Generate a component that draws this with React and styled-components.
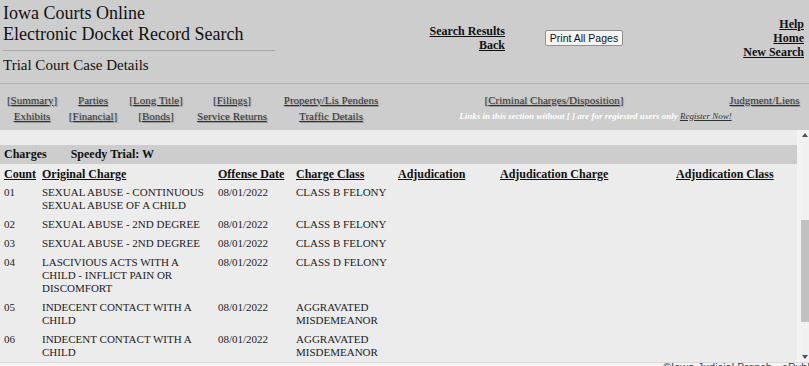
import React from 'react';
import styled, { createGlobalStyle } from 'styled-components';

const Global = createGlobalStyle`
  html, body { margin: 0; padding: 0; background: #cdcdcd; }
  body { font-family: "Liberation Serif", "Times New Roman", serif; overflow: hidden; }
`;

const Page = styled.div`
  width: 809px;
  height: 366px;
  overflow: hidden;
  display: flex;
  flex-direction: column;
  background: #cdcdcd;
  color: #111;
`;

const Header = styled.header`
  display: flex;
  align-items: flex-start;
  height: 84px;
  box-sizing: border-box;
  border-bottom: 1px solid #b4b4b4;
`;

const TitleBlock = styled.div`
  width: 275px;
  padding: 3px 0 0 3px;
  box-sizing: border-box;
`;

const Title = styled.div`
  font-size: 18px;
  line-height: 21px;
  color: #111;
`;

const Rule = styled.div`
  height: 1px;
  background: #a9a9a9;
  margin: 5px 0 6px;
`;

const Subtitle = styled.div`
  font-size: 15px;
  line-height: 17px;
  color: #111;
`;

const LinkStack = styled.div`
  display: flex;
  flex-direction: column;
  align-items: flex-end;
  margin-top: ${p => p.$top}px;
  width: ${p => p.$width ? `${p.$width}px` : 'auto'};
  margin-left: ${p => p.$auto ? 'auto' : '0'};
  padding-right: ${p => p.$pr || 0}px;
`;

const BoldLink = styled.a`
  font-size: 12px;
  line-height: 14px;
  font-weight: bold;
  color: #111;
  text-decoration: underline;
  cursor: pointer;
`;

const PrintButton = styled.button`
  margin: 30px 0 0 40px;
  height: 16px;
  width: 78px;
  padding: 0;
  font-family: "Liberation Sans", Arial, sans-serif;
  font-size: 10.5px;
  color: #111;
  background: #f5f5f5;
  border: 1px solid #8f8f8f;
  border-radius: 2px;
`;

const Nav = styled.nav`
  display: grid;
  grid-template-columns: 64px 58px 68px 84px 114px 332px 1fr;
  grid-auto-rows: 16px;
  padding: 8px 0 6px;
  height: 46px;
  box-sizing: border-box;
  font-size: 11px;
  line-height: 16px;
  color: #333;
`;

const NavCell = styled.div`
  text-align: center;
  white-space: nowrap;
  text-shadow: 1px 1px 1px #9a9a9a;
`;

const NavLink = styled.a`
  color: #333;
  text-decoration: underline;
  cursor: pointer;
`;

const Note = styled.div`
  grid-column: 6 / span 2;
  text-align: center;
  font-size: 9px;
  font-style: italic;
  font-weight: bold;
  color: #fff;
  white-space: nowrap;
  padding-right: 6px;
`;

const RegisterLink = styled.a`
  color: #333;
  font-weight: normal;
  text-decoration: underline;
`;

const Frame = styled.div`
  height: 233px;
  display: flex;
  background: #f4f4f4;
`;

const Content = styled.div`
  width: 797px;
  background: #ececec;
  overflow: hidden;
`;

const TopGap = styled.div`
  height: 15px;
`;

const Band = styled.div`
  height: 19px;
  display: flex;
  align-items: center;
  background: #cdcdcd;
  padding-left: 4px;
  font-size: 12px;
  font-weight: bold;
  color: #111;
`;

const BandItem = styled.span`
  margin-left: ${p => p.$ml || 0}px;
  white-space: pre;
`;

const Table = styled.div`
  display: grid;
  grid-template-columns: 38px 176px 78px 102px 102px 176px 1fr;
  padding-left: 4px;
`;

const HeadCell = styled.div`
  font-size: 12px;
  line-height: 14px;
  font-weight: bold;
  text-decoration: underline;
  color: #111;
  padding: 3px 0 2.5px;
  white-space: nowrap;
`;

const Cell = styled.div`
  font-size: 11px;
  line-height: 13px;
  color: #222;
  padding: 3px 10px 3px 0;
`;

const Scrollbar = styled.div`
  width: 8px;
  margin-left: 4px;
  display: flex;
  flex-direction: column;
  background: #f1f1f1;
`;

const Arrow = styled.div`
  height: 10px;
  display: flex;
  align-items: center;
  justify-content: center;
`;

const Thumb = styled.div`
  margin-top: 80px;
  height: 102px;
  background: #c1c1c1;
`;

const Fill = styled.div`
  flex: 1;
`;

const Footer = styled.footer`
  height: 3px;
  overflow: hidden;
  background: #f4f4f4;
  border-top: 1px solid #dcdcdc;
  padding-left: 663px;
  font-family: "Liberation Sans", Arial, sans-serif;
  font-size: 11px;
  line-height: 8px;
  color: #444;
  white-space: nowrap;
`;

const navRow1 = [
  { t: 'Summary', b: true },
  { t: 'Parties' },
  { t: 'Long Title', b: true },
  { t: 'Filings', b: true },
  { t: 'Property/Lis Pendens' },
  { t: 'Criminal Charges/Disposition', b: true },
  { t: 'Judgment/Liens' },
];
const navRow2 = [
  { t: 'Exhibits' },
  { t: 'Financial', b: true },
  { t: 'Bonds', b: true },
  { t: 'Service Returns' },
  { t: 'Traffic Details' },
];

const charges = [
  ['01', 'SEXUAL ABUSE - CONTINUOUS SEXUAL ABUSE OF A CHILD', '08/01/2022', 'CLASS B FELONY'],
  ['02', 'SEXUAL ABUSE - 2ND DEGREE', '08/01/2022', 'CLASS B FELONY'],
  ['03', 'SEXUAL ABUSE - 2ND DEGREE', '08/01/2022', 'CLASS B FELONY'],
  ['04', 'LASCIVIOUS ACTS WITH A CHILD - INFLICT PAIN OR DISCOMFORT', '08/01/2022', 'CLASS D FELONY'],
  ['05', 'INDECENT CONTACT WITH A CHILD', '08/01/2022', 'AGGRAVATED MISDEMEANOR'],
  ['06', 'INDECENT CONTACT WITH A CHILD', '08/01/2022', 'AGGRAVATED MISDEMEANOR'],
];

const heads = ['Count', 'Original Charge', 'Offense Date', 'Charge Class', 'Adjudication', 'Adjudication Charge', 'Adjudication Class'];

function NavItem({ t, b }) {
  return (
    <NavCell>
      {b && '['}
      <NavLink>{t}</NavLink>
      {b && ']'}
    </NavCell>
  );
}

export default function App() {
  return (
    <Page>
      <Global />
      <Header>
        <TitleBlock>
          <Title>Iowa Courts Online</Title>
          <Title>Electronic Docket Record Search</Title>
          <Rule />
          <Subtitle>Trial Court Case Details</Subtitle>
        </TitleBlock>
        <LinkStack $top={24} $width={230}>
          <BoldLink>Search Results</BoldLink>
          <BoldLink>Back</BoldLink>
        </LinkStack>
        <PrintButton>Print All Pages</PrintButton>
        <LinkStack $top={17} $auto $pr={5}>
          <BoldLink>Help</BoldLink>
          <BoldLink>Home</BoldLink>
          <BoldLink>New Search</BoldLink>
        </LinkStack>
      </Header>
      <Nav>
        {navRow1.map(n => <NavItem key={n.t} {...n} />)}
        {navRow2.map(n => <NavItem key={n.t} {...n} />)}
        <Note>
          Links in this section without [ ] are for regiested users only <RegisterLink>Register Now!</RegisterLink>
        </Note>
      </Nav>
      <Frame>
        <Content>
          <TopGap />
          <Band>
            <BandItem>Charges</BandItem>
            <BandItem $ml={24}>Speedy Trial: W</BandItem>
          </Band>
          <Table>
            {heads.map(h => <HeadCell key={h}>{h}</HeadCell>)}
            {charges.map(([c, oc, d, cl]) => (
              <React.Fragment key={c}>
                <Cell>{c}</Cell>
                <Cell>{oc}</Cell>
                <Cell>{d}</Cell>
                <Cell>{cl}</Cell>
                <Cell />
                <Cell />
                <Cell />
              </React.Fragment>
            ))}
          </Table>
        </Content>
        <Scrollbar>
          <Arrow>
            <svg width="6" height="4" viewBox="0 0 6 4"><path d="M0 4 L3 0 L6 4 Z" fill="#505050" /></svg>
          </Arrow>
          <Thumb />
          <Fill />
          <Arrow>
            <svg width="6" height="4" viewBox="0 0 6 4"><path d="M0 0 L6 0 L3 4 Z" fill="#505050" /></svg>
          </Arrow>
        </Scrollbar>
      </Frame>
      <Footer>©Iowa Judicial Branch - ePublic IOWA</Footer>
    </Page>
  );
}
